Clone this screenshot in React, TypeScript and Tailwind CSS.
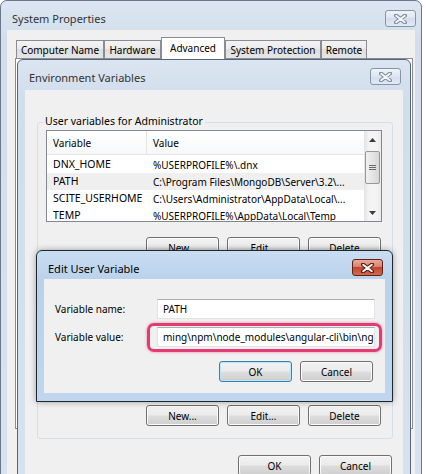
import React from "react"

type Tone = "inactive" | "active"

function CloseButton({ tone = "inactive" }: { tone?: Tone }) {
  const red = tone === "active"
  return (
    <div
      className={`flex h-[17px] w-[31px] items-center justify-center rounded-[3px] border ${
        red
          ? "border-[#5b2417] bg-[linear-gradient(#e9a99a,#d9826c_45%,#c2452c_50%,#d8684d)]"
          : "border-[#8795a8] bg-[linear-gradient(#eef3f9,#dde6f1_50%,#d3dded_50%,#e1e9f3)]"
      }`}
    >
      <svg width="13" height="10" viewBox="0 0 13 10">
        <path
          d="M2 1.5 L11 8.5 M11 1.5 L2 8.5"
          stroke={red ? "#4a1b12" : "#7e8a9b"}
          strokeWidth="4"
          strokeLinecap="round"
          fill="none"
        />
        <path
          d="M2.2 1.8 L10.8 8.2 M10.8 1.8 L2.2 8.2"
          stroke={red ? "#ffffff" : "#f4f7fb"}
          strokeWidth="2"
          strokeLinecap="round"
          fill="none"
        />
      </svg>
    </div>
  )
}

function Btn({ label, focused = false }: { label: string; focused?: boolean }) {
  return (
    <div
      className={`flex h-[21px] w-[73px] items-center justify-center rounded-[3px] border bg-[linear-gradient(#f2f2f2,#ebebeb_48%,#dddddd_52%,#cfcfcf)] ${
        focused
          ? "border-[#3c7fb1] shadow-[inset_0_0_0_1px_#b6e6fb]"
          : "border-[#707070] shadow-[inset_0_0_0_1px_#fbfbfb]"
      }`}
    >
      {label}
    </div>
  )
}

const rows = [
  { name: "DNX_HOME", value: "%USERPROFILE%\\.dnx" },
  { name: "PATH", value: "C:\\Program Files\\MongoDB\\Server\\3.2\\...", selected: true },
  { name: "SCITE_USERHOME", value: "C:\\Users\\Administrator\\AppData\\Local\\..." },
  { name: "TEMP", value: "%USERPROFILE%\\AppData\\Local\\Temp" },
]

function Tab({ label, width, active = false }: { label: string; width: string; active?: boolean }) {
  return (
    <div
      className={`flex items-center justify-center border border-[#898c95] ${width} ${
        active
          ? "relative z-10 -mb-px h-[22px] border-b-0 bg-white pb-[2px]"
          : "h-[18px] border-b-0 bg-[linear-gradient(#f3f3f3,#ebebeb_50%,#dedede_50%,#e6e6e6)]"
      }`}
    >
      {label}
    </div>
  )
}

export default function App() {
  return (
    <div className="relative h-[474px] w-[426px] overflow-hidden bg-white font-['Noto_Sans',sans-serif] text-[10px] leading-none text-black">
      {/* System Properties (back window) */}
      <div className="absolute left-0 top-0 h-[520px] w-[422px] rounded-t-[7px] border border-[#6b788a] bg-[linear-gradient(#dce6f2,#d2deec_40px,#d9e3ef)]">
        <div className="flex h-[29px] items-start justify-between pl-[11px] pr-[5px] pt-[9px]">
          <span className="pt-[3px] text-[11px] text-[#333]">System Properties</span>
          <CloseButton />
        </div>
        <div className="mx-[6px] h-[480px] bg-[#f0f0f0] px-[8px] pt-[7px]">
          <div className="flex items-end pl-[1px]">
            <Tab label="Computer Name" width="w-[88px]" />
            <Tab label="Hardware" width="w-[57px]" />
            <Tab label="Advanced" width="w-[64px]" active />
            <Tab label="System Protection" width="w-[96px]" />
            <Tab label="Remote" width="w-[46px]" />
          </div>
          <div className="h-[371px] w-[398px] border border-[#898c95] bg-white" />
        </div>
      </div>

      {/* Environment Variables */}
      <div className="absolute left-[17px] top-[59px] h-[440px] w-[394px] rounded-t-[6px] border border-[#56657a] bg-[linear-gradient(#dbe5f1,#d1ddeb_40px,#d8e2ee)]">
        <div className="flex h-[30px] items-start justify-between pl-[11px] pr-[9px] pt-[8px]">
          <span className="pt-[4px] text-[11px] text-[#333]">Environment Variables</span>
          <CloseButton />
        </div>
        <div className="mx-[7px] h-[420px] bg-[#f0f0f0] pt-[32px]">
          <div className="relative ml-[12px] flex h-[317px] w-[356px] flex-col rounded-[3px] border border-[#d5dfe5]">
            <span className="absolute -top-[7px] left-[5px] bg-[#f0f0f0] px-[2px] text-[10.5px]">
              User variables for Administrator
            </span>
            <div className="ml-[8px] mt-[7px] flex h-[92px] w-[336px] border border-[#828790] bg-white">
              <div className="flex-1 overflow-hidden">
                <div className="flex h-[24px] items-center border-b border-[#e5e5e5] bg-[linear-gradient(#ffffff,#f7f8fa)]">
                  <div className="flex h-full w-[100px] items-center border-r border-[#e5e5e5] pl-[6px]">Variable</div>
                  <div className="pl-[6px]">Value</div>
                </div>
                <div className="pt-[1px]">
                  {rows.map((r) => (
                    <div
                      key={r.name}
                      className={`flex h-[17px] items-center whitespace-nowrap ${r.selected ? "bg-[#efefef]" : ""}`}
                    >
                      <div className="w-[100px] pl-[6px] text-[10.5px]">{r.name}</div>
                      <div className="pl-[6px]">{r.value}</div>
                    </div>
                  ))}
                </div>
              </div>
              <div className="flex w-[17px] flex-col items-center bg-[linear-gradient(90deg,#e3e3e3,#f4f4f4_30%,#f4f4f4_70%,#ebebeb)]">
                <div className="flex h-[17px] items-center">
                  <svg width="7" height="4" viewBox="0 0 7 4"><path d="M0 4 L3.5 0 L7 4 Z" fill="#3d3d3d" /></svg>
                </div>
                <div className="mt-[3px] flex h-[33px] w-[15px] items-center justify-center rounded-[2px] border border-[#979797] bg-[linear-gradient(90deg,#f1f1f1,#e4e4e4_50%,#d6d6d6)]">
                  <svg width="7" height="7" viewBox="0 0 7 7">
                    <path d="M0 1.5 H7 M0 3.5 H7 M0 5.5 H7" stroke="#6a6a6a" strokeWidth="1" />
                  </svg>
                </div>
                <div className="mt-auto flex h-[17px] items-center">
                  <svg width="7" height="4" viewBox="0 0 7 4"><path d="M0 0 L3.5 4 L7 0 Z" fill="#3d3d3d" /></svg>
                </div>
              </div>
            </div>
            <div className="mt-[15px] flex justify-end gap-[8px] pr-[11px]">
              <Btn label="New..." />
              <Btn label="Edit..." />
              <Btn label="Delete" />
            </div>
            <div className="mb-[12px] mt-auto flex justify-end gap-[8px] pr-[11px]">
              <Btn label="New..." />
              <Btn label="Edit..." />
              <Btn label="Delete" />
            </div>
          </div>
          <div className="mt-[16px] flex justify-end gap-[8px] pr-[11px]">
            <Btn label="OK" />
            <Btn label="Cancel" />
          </div>
        </div>
      </div>

      {/* Edit User Variable (active dialog) */}
      <div className="absolute left-[36px] top-[250px] h-[152px] w-[357px] rounded-t-[6px] border border-[#1d2733] bg-[linear-gradient(#c9ddf2,#b9d1eb_30px,#bfd6ee)] shadow-[0_0_6px_rgba(0,0,0,0.35)]">
        <div className="flex h-[28px] items-start justify-between pl-[11px] pr-[9px] pt-[8px]">
          <span className="pt-[4px] text-[11px] text-black">Edit User Variable</span>
          <CloseButton tone="active" />
        </div>
        <div className="relative mx-[7px] h-[114px] bg-[#f0f0f0] pr-[10px] pt-[20px]">
          <div className="flex items-center">
            <span className="w-[113px] pl-[11px]">Variable name:</span>
            <div className="flex h-[20px] flex-1 items-center border border-[#dfe3e8] border-t-[#abadb3] bg-white pl-[5px]">
              PATH
            </div>
          </div>
          <div className="mt-[8px] flex items-center">
            <span className="w-[113px] pl-[11px]">Variable value:</span>
            <div className="flex h-[20px] flex-1 items-center overflow-hidden whitespace-nowrap border border-[#dfe3e8] border-t-[#abadb3] bg-white pl-[5px]">
              {"ming\\npm\\node_modules\\angular-cli\\bin\\ng"}
            </div>
          </div>
          <div className="mt-[14px] flex justify-end gap-[8px] pr-[2px]">
            <Btn label="OK" focused />
            <Btn label="Cancel" />
          </div>
          {/* highlight annotation */}
          <div className="absolute left-[103px] top-[44px] h-[29px] w-[235px] rounded-[7px] border-[3px] border-[#e23a72] shadow-[0_0_3px_rgba(226,58,114,0.6)]" />
        </div>
      </div>
    </div>
  )
}
